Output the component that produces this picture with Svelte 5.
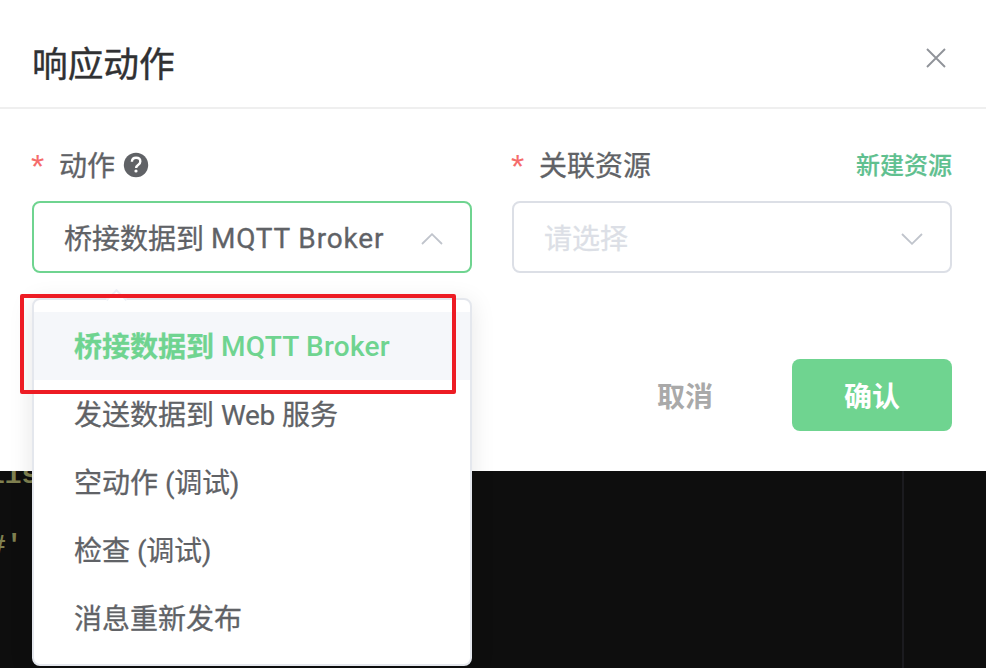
<script>
  const options = [
    { zh: '桥接数据到', latin: 'MQTT Broker', tail: '' },
    { zh: '发送数据到', latin: 'Web', tail: '服务' },
    { zh: '空动作', latin: '(调试)', tail: '' },
    { zh: '检查', latin: '(调试)', tail: '' },
    { zh: '消息重新发布', latin: '', tail: '' }
  ];
  let selected = $state(0);
</script>

<main class="page">
  <section class="dialog">
    <header>
      <h1>响应动作</h1>
      <button class="close" aria-label="关闭">
        <svg width="20" height="20" viewBox="0 0 20 20"><path d="M1 1 19 19M19 1 1 19" /></svg>
      </button>
    </header>

    <div class="fields">
      <div class="field">
        <div class="label">
          <span class="star">*</span><span class="name">动作</span>
          <svg class="help" width="26" height="26" viewBox="0 0 26 26">
            <circle cx="13" cy="13" r="12.2" fill="#606266" />
            <path d="M8.9 9.8C9 7.2 10.7 5.8 13.1 5.8c2.5 0 4.2 1.5 4.2 3.6 0 1.5-.8 2.4-2 3.3-1.4 1-2.2 1.6-2.2 3.3" fill="none" stroke="#fff" stroke-width="2.4" />
            <circle cx="13" cy="19" r="1.6" fill="#fff" />
          </svg>
        </div>
        <div class="select active">
          <span class="value">桥接数据到 <span class="en">MQTT Broker</span></span>
          <svg class="arrow" width="22" height="12" viewBox="0 0 22 12"><path d="M1 11 11 1.2 21 11" /></svg>
        </div>
        <div class="menu">
          <i class="tip"></i>
          <ul>
            {#each options as o, i}
              <li class:selected={selected === i}>
                <button onclick={() => (selected = i)}>{o.zh} <span>{o.latin}</span> {o.tail}</button>
              </li>
            {/each}
          </ul>
        </div>
      </div>

      <div class="field">
        <div class="label">
          <span class="star">*</span><span class="name">关联资源</span>
          <span class="create">新建资源</span>
        </div>
        <div class="select">
          <span class="placeholder">请选择</span>
          <svg class="arrow" width="22" height="12" viewBox="0 0 22 12"><path d="M1 1 11 10.8 21 1" /></svg>
        </div>
      </div>
    </div>

    <footer>
      <button class="cancel">取消</button>
      <button class="confirm">确认</button>
    </footer>
  </section>

  <section class="editor">
    <pre><span>lis</span><span>#'</span></pre>
    <div class="rule"></div>
  </section>
  <div class="highlight"></div>
</main>

<style>
  :global(body) {
    background: #0e0e0e;
    overflow: hidden;
  }
  .page {
    position: relative;
    width: 986px;
    height: 668px;
    overflow: hidden;
    display: flex;
    flex-direction: column;
    font-family: Roboto, "Noto Sans CJK SC", sans-serif;
    font-size: 28px;
    color: #606266;
  }
  .page * {
    box-sizing: border-box;
  }
  button {
    font: inherit;
    color: inherit;
    border: 0;
    padding: 0;
    background: none;
  }
  .dialog {
    height: 471px;
    background: #fff;
    flex: none;
    display: flex;
    flex-direction: column;
    position: relative;
    z-index: 1;
  }
  header {
    height: 109px;
    border-bottom: 2px solid #efefef;
    display: flex;
    justify-content: space-between;
    padding: 38px 40px 0 32px;
  }
  h1 {
    margin: 2px 0 0;
    font-size: 35.7px;
    font-weight: 400;
    line-height: 50px;
    color: #303133;
    -webkit-text-stroke: 0.4px currentColor;
  }
  .close {
    height: 20px;
    width: 20px;
    margin: 10px 0 0;
    display: flex;
  }
  .close path {
    stroke: #909399;
    stroke-width: 1.9;
  }
  .fields {
    display: flex;
    gap: 40px;
    padding: 32px 34px 0 32px;
  }
  .field {
    width: 440px;
    position: relative;
  }
  .label {
    height: 48px;
    display: flex;
    align-items: center;
    line-height: 48px;
  }
  .name {
    padding-top: 3px;
  }
  .name,
  .value,
  .placeholder,
  li {
    -webkit-text-stroke: 0.3px currentColor;
  }
  .star {
    color: #f56c6c;
    width: 27px;
    font-family: "Liberation Sans", sans-serif;
    font-size: 34px;
    padding-top: 1px;
    margin-left: -1px;
    margin-right: 1px;
  }
  .help {
    margin-left: 8px;
    margin-top: -1px;
  }
  .create {
    margin-left: auto;
    padding-top: 1px;
    font-size: 24px;
    font-weight: 500;
    color: #5fc08f;
    -webkit-text-stroke: 0.2px currentColor;
  }
  .select {
    margin-top: 12px;
    height: 72px;
    border: 2px solid #dcdfe6;
    border-radius: 8px;
    padding: 0 27px 0 30px;
    display: flex;
    align-items: center;
    justify-content: space-between;
  }
  .select.active {
    border-color: #6fd490;
  }
  .value .en {
    letter-spacing: 0.85px;
    vertical-align: 1px;
    line-height: 1;
  }
  .placeholder {
    color: #dcdfe6;
  }
  .arrow {
    margin-top: 3px;
  }
  .arrow path {
    fill: none;
    stroke: #c0c4cc;
    stroke-width: 1.8;
  }
  .menu {
    position: absolute;
    left: 0;
    top: 157px;
    width: 440px;
    height: 368px;
    background: #fff;
    border: 2px solid #e4e7ed;
    border-radius: 8px;
    box-shadow: 0 4px 24px rgba(0, 0, 0, 0.1);
    padding-top: 12px;
  }
  .tip {
    position: absolute;
    left: 75px;
    top: -8px;
    width: 15px;
    height: 15px;
    background: #fff;
    border: solid #ebeef5;
    border-width: 2px 0 0 2px;
    transform: rotate(45deg);
  }
  ul {
    position: relative;
    margin: 0;
    padding: 0;
    list-style: none;
  }
  li {
    height: 68px;
    line-height: 68px;
    padding: 2px 40px 0;
  }
  li button {
    display: block;
    -webkit-text-stroke: inherit;
  }
  li.selected {
    color: #6fd490;
    font-weight: 700;
    background: #f5f7fa;
  }
  li span {
    line-height: 1;
  }
  li.selected span {
    font-weight: 500;
    letter-spacing: 0.25px;
    vertical-align: 1px;
    -webkit-text-stroke: 0;
  }
  li:not(.selected) span {
    letter-spacing: -0.3px;
    -webkit-text-stroke: 0.2px currentColor;
  }
  footer {
    display: flex;
    justify-content: flex-end;
    gap: 79px;
    padding: 86px 34px 0 0;
    font-weight: 700;
  }
  .cancel {
    color: #a9a9a9;
  }
  .confirm {
    width: 160px;
    height: 72px;
    border-radius: 8px;
    background: #6fd490;
    color: #fff;
  }
  .editor {
    flex: 1;
    background: #0e0e0e;
    display: flex;
    justify-content: space-between;
    overflow: hidden;
  }
  pre {
    margin: -29px 0 0 -12px;
    font: 700 28px/68px "Liberation Mono", monospace;
    color: #7f8050;
    display: flex;
    flex-direction: column;
  }
  pre span:last-child {
    margin: 2px 0 0 1px;
  }
  .rule {
    width: 84px;
    border-left: 2px solid #1b1b1f;
  }
  .highlight {
    position: absolute;
    z-index: 2;
    left: 20px;
    top: 294px;
    width: 436px;
    height: 100px;
    border: 4px solid #ed1c24;
    border-radius: 2px;
    box-sizing: border-box;
    pointer-events: none;
  }
</style>
